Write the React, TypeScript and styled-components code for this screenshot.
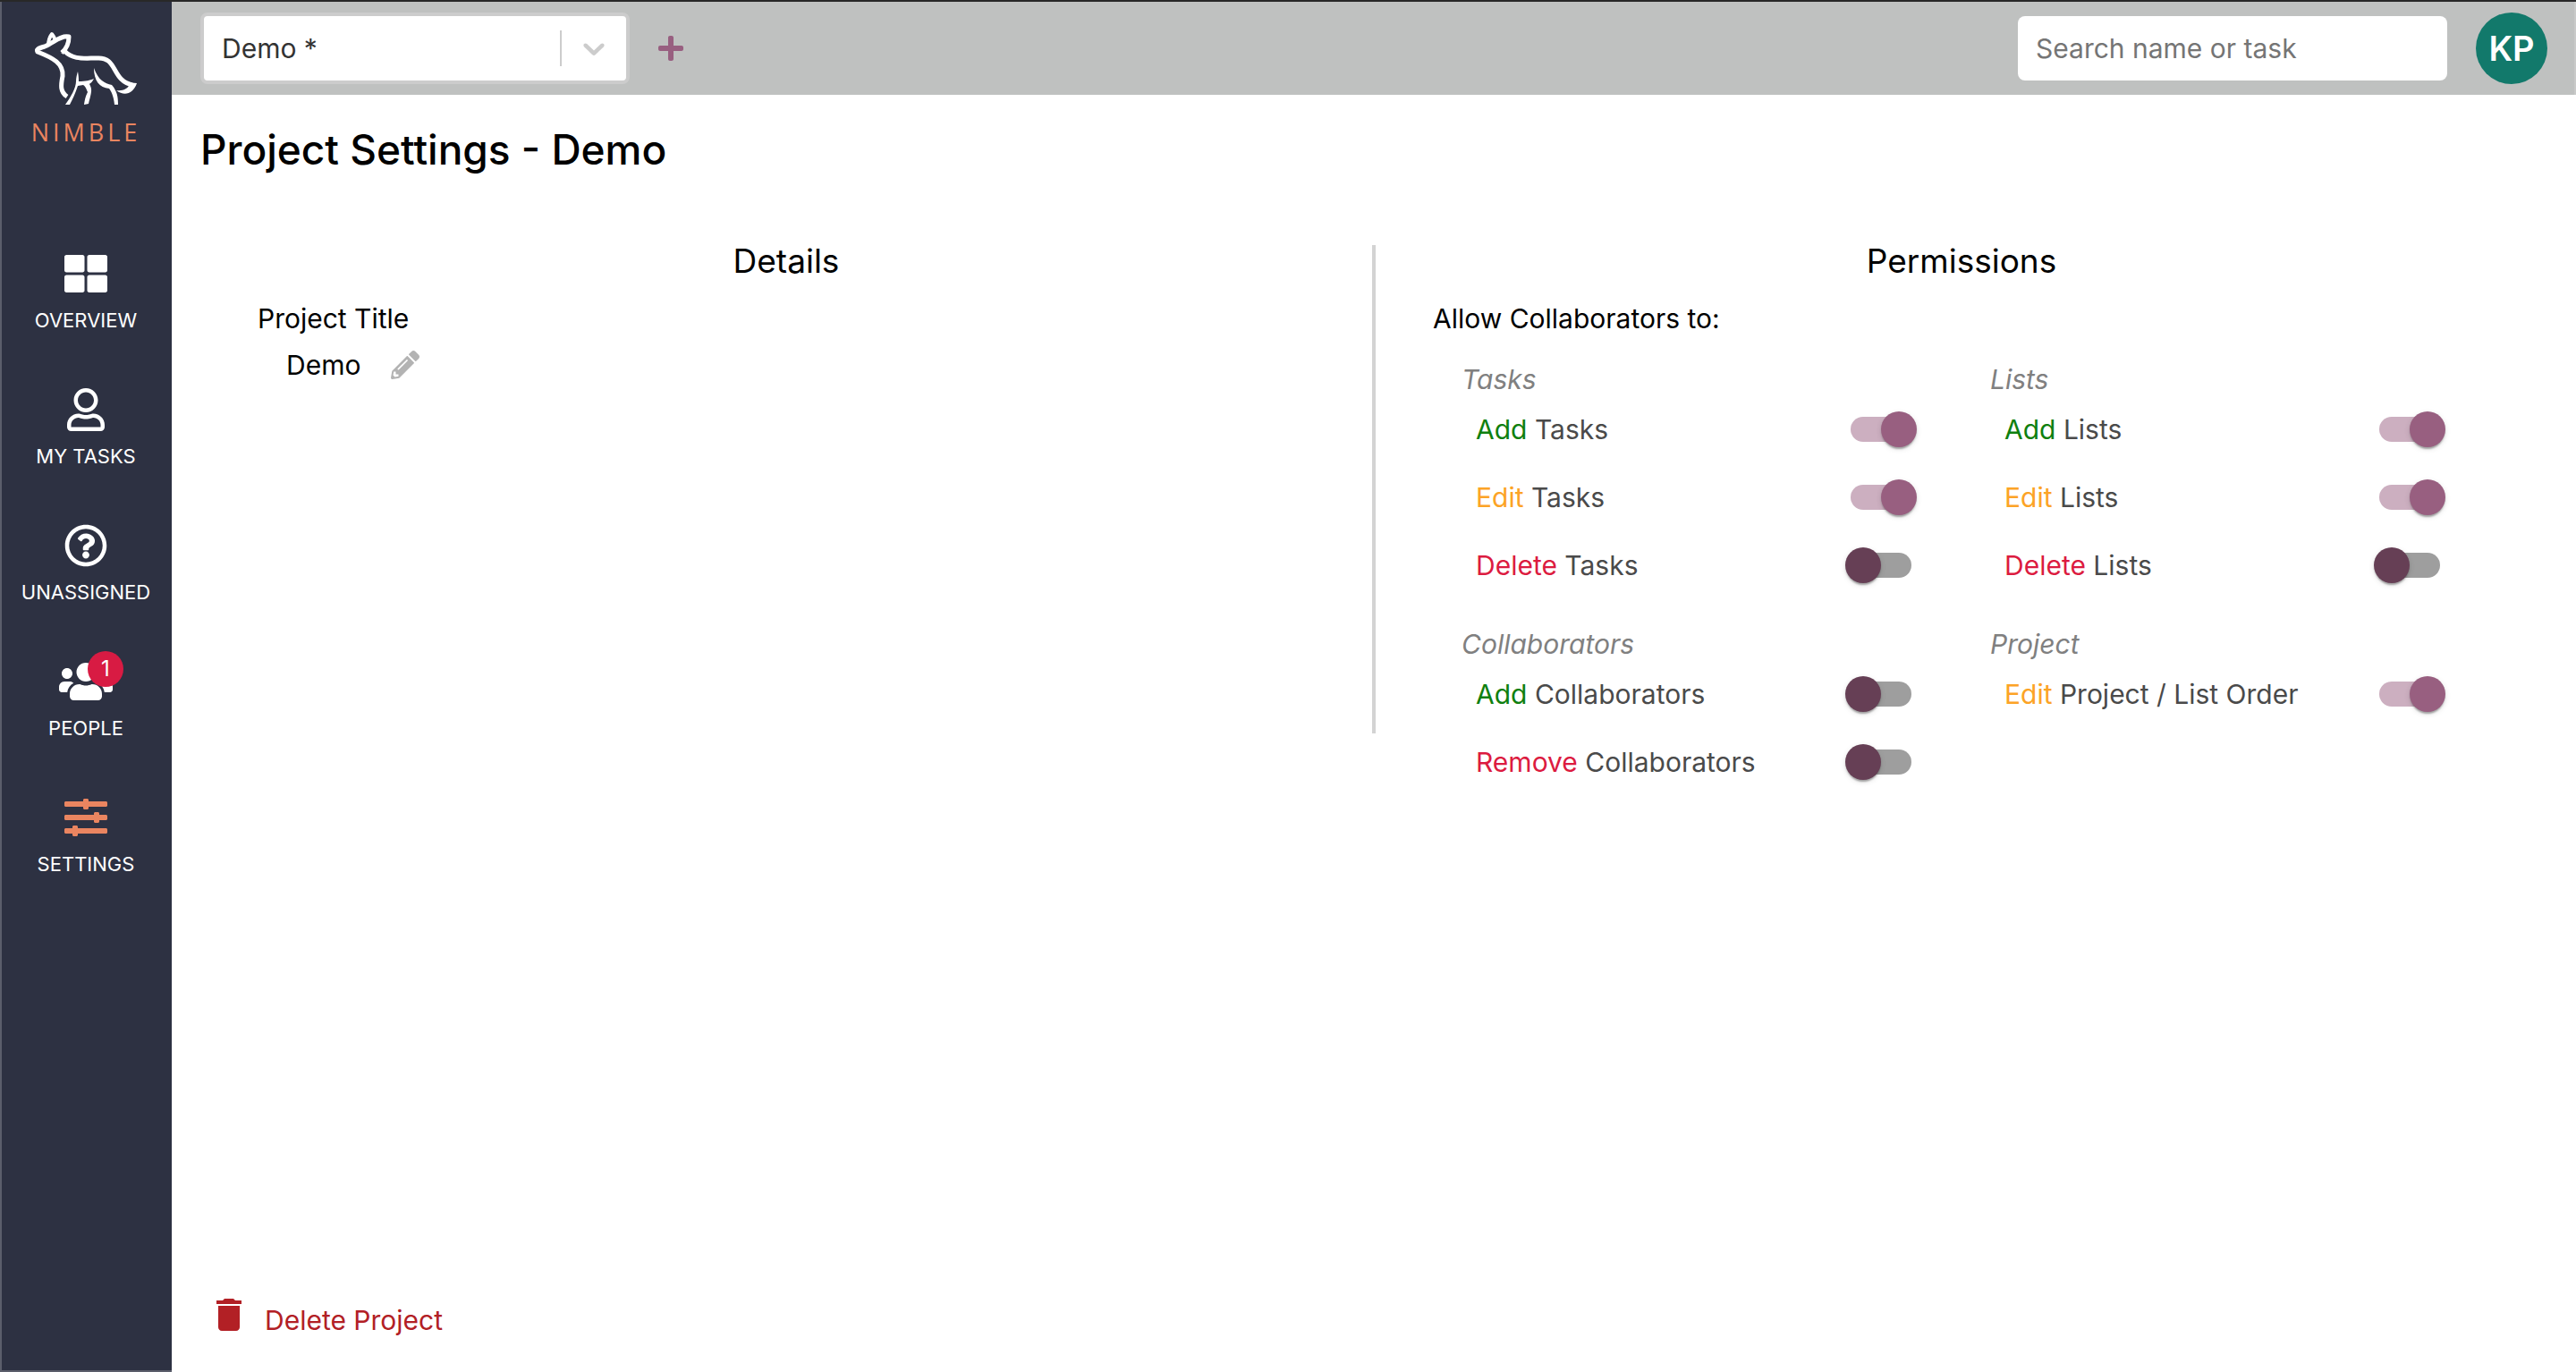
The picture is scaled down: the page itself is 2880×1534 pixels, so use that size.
import React, { useState } from "react";
import styled, { createGlobalStyle } from "styled-components";
import {
  FaThLarge,
  FaRegUser,
  FaRegQuestionCircle,
  FaUsers,
  FaSlidersH,
  FaPlus,
} from "react-icons/fa";
import { MdDelete } from "react-icons/md";

const GlobalStyle = createGlobalStyle`
  *, *::before, *::after { box-sizing: border-box; }
  body {
    margin: 0;
    background: #fff;
    color: #000;
    font-family: Inter, "Liberation Sans", sans-serif;
    font-size: 30px;
    line-height: 36px;
  }
  h1, h2, h3, p, ul { margin: 0; padding: 0; font-weight: 400; }
  ul { list-style: none; }
  button, input, select { font: inherit; color: inherit; }
  button { border: 0; padding: 0; background: none; cursor: pointer; }
`;

const Shell = styled.div`
  display: flex;
  min-height: 100vh;
  border-top: 2px solid #282828;
`;

const Sidebar = styled.nav`
  flex: none;
  width: 192px;
  padding: 32px 2px 0 0;
  display: flex;
  flex-direction: column;
  align-items: center;
  background: #2d3142;
  border-left: 2px solid #5b5e6b;
  border-bottom: 2px solid #5b5e6b;
`;

const Brand = styled.a`
  display: flex;
  flex-direction: column;
  align-items: center;
  color: #ea8560;
  text-decoration: none;
  font-family: "Open Sans", sans-serif;
  font-size: 27px;
  line-height: 32px;
  letter-spacing: 4px;
`;

const BrandName = styled.span`
  margin-top: 12px;
`;

const NavList = styled.ul`
  margin-top: 118px;
  display: flex;
  flex-direction: column;
  gap: 62px;
`;

const NavLink = styled.a`
  display: flex;
  flex-direction: column;
  align-items: center;
  gap: 14px;
  color: #fff;
  text-decoration: none;
  font-size: 22px;
  line-height: 28px;
`;

const IconHolder = styled.span<{ $active?: boolean; $wide?: boolean }>`
  position: relative;

  svg {
    display: block;
    width: ${(p) => (p.$wide ? "60px" : "48px")};
    height: 48px;
    color: ${(p) => (p.$active ? "#ea8560" : "#fff")};
  }
`;

const Badge = styled.span`
  position: absolute;
  top: -10px;
  right: -12px;
  width: 40px;
  height: 40px;
  border-radius: 50%;
  background: #d81b43;
  font-size: 24px;
  line-height: 40px;
  text-align: center;
`;

const Main = styled.div`
  flex: 1;
  min-width: 0;
  display: flex;
  flex-direction: column;
`;

const TopBar = styled.header`
  height: 104px;
  padding: 0 30px 0 32px;
  display: flex;
  align-items: center;
  gap: 32px;
  background: #bfc1c0;
  border-right: 2px solid #c9cac9;
`;

const Picker = styled.div`
  width: 480px;
  height: 80px;
  display: grid;
  align-items: center;
  border: 4px solid #ccc;
  border-radius: 8px;
  background: #fff;

  > * { grid-area: 1 / 1; }
`;

const PickerSelect = styled.select`
  width: 100%;
  height: 72px;
  padding: 0 80px 0 20px;
  appearance: none;
  border: 0;
  background: none;
  color: #333;
`;

const PickerArrow = styled.span`
  justify-self: end;
  display: flex;
  padding: 0 16px;
  border-left: 2px solid #ccc;
  color: #ccc;
  pointer-events: none;
`;

const AddButton = styled.button`
  display: flex;
  color: #985f80;

  svg {
    width: 28px;
    height: 32px;
  }
`;

const Search = styled.input`
  width: 480px;
  height: 72px;
  margin-left: auto;
  padding: 0 20px;
  border: 0;
  border-radius: 8px;
  background: #fff;

  &::placeholder { color: #757575; opacity: 1; }
`;

const Avatar = styled.button`
  width: 80px;
  height: 80px;
  border-radius: 50%;
  background: #12796b;
  color: #fff;
  font-size: 38px;
  font-weight: 600;
`;

const Page = styled.main`
  flex: 1;
  padding: 32px 32px 40px;
  display: flex;
  flex-direction: column;
`;

const PageTitle = styled.h1`
  font-size: 46px;
  line-height: 58px;
  font-weight: 500;
`;

const Panels = styled.div`
  margin-top: 78px;
  display: grid;
  grid-template-columns: 1fr 4px 1fr;
`;

const Divider = styled.div`
  height: 546px;
  background: #d3d3d3;
`;

const Panel = styled.section`
  padding: 0 64px;
`;

const PanelTitle = styled.h2`
  text-align: center;
  font-size: 37px;
  line-height: 36px;
`;

const PanelLead = styled.h3`
  margin-top: 28px;
  font-size: 30px;
`;

const ProjectName = styled.div`
  margin-top: 16px;
  padding-left: 32px;
  display: flex;
  align-items: center;
  gap: 34px;
`;

const EditButton = styled.button`
  display: flex;
  color: #b3b3b3;
`;

const GroupGrid = styled.div`
  margin-top: 32px;
  display: grid;
  grid-template-columns: 1fr 1fr;
  row-gap: 32px;
`;

const Group = styled.div`
  padding: 0 32px;
`;

const GroupTitle = styled.h3`
  font-size: 30px;
  font-style: italic;
  color: gray;
`;

const PermissionRow = styled.label`
  height: 76px;
  padding: 0 24px 0 16px;
  display: flex;
  align-items: center;
  justify-content: space-between;
  color: #4a4a4a;
`;

const actionColors = {
  Add: "#0f800f",
  Edit: "#fca326",
  Delete: "#dc1b40",
  Remove: "#dc1b40",
};

const Action = styled.span<{ $kind: keyof typeof actionColors }>`
  color: ${(p) => actionColors[p.$kind]};
`;

const Toggle = styled.input`
  appearance: none;
  width: 68px;
  height: 28px;
  margin: 0;
  display: flex;
  align-items: center;
  border-radius: 14px;
  background: #9e9e9e;
  cursor: pointer;

  &::before {
    content: "";
    flex: none;
    width: 40px;
    height: 40px;
    margin-left: -6px;
    border-radius: 50%;
    background: #663f55;
    box-shadow: 0 4px 2px -2px rgba(0, 0, 0, 0.2), 0 2px 2px rgba(0, 0, 0, 0.14),
      0 2px 6px rgba(0, 0, 0, 0.12);
  }

  &:checked { background: #ccafc0; }
  &:checked::before { margin-left: 34px; background: #985f80; }
`;

const DeleteButton = styled.button`
  margin-top: auto;
  padding-left: 8px;
  align-self: flex-start;
  display: flex;
  align-items: flex-end;
  gap: 16px;
  color: #b22025;
`;

const FoxLogo = () => (
  <svg width="116" height="86" viewBox="0 0 116 86" fill="none" aria-hidden="true">
    <g stroke="#fff" strokeWidth="5" strokeLinejoin="round">
      <path d="M37 74C29 69 30 61 32 51C33 37 22 31 4 24C2 21 5 20 12 18C22 14 30 5 39 7C39 14 37 20 31 25" />
      <path d="M16 17C16 12 17 8 20 4C23 8 24 11 24 13" strokeWidth="4" />
      <path d="M34 23C44 33 55 31 70 31C94 29 86 56 110 61" />
    </g>
    <g fill="#fff">
      <path d="M30 26L38 18L36 24Z" />
      <path d="M92 67C100 68 104 65 106 62L103 58L115 59C111 71 101 74 92 67Z" />
      <path d="M49 46C50 52 50 54 50 57C58 57 62 56 67 54C65 58 63 59 62 60C65 66 65 67 61 82L56 83C57 76 58 73 60 69C58 64 57 62 55 61L49 62C46 71 43 77 40 83H35C41 75 47 64 47 57C47 53 48 49 49 46Z" />
      <path d="M67 42C72 56 79 59 87 61C93 68 94 74 94 83H90C89 74 87 69 84 65C73 64 67 56 67 42Z" />
    </g>
  </svg>
);

const ChevronDown = () => (
  <svg width="40" height="40" viewBox="0 0 20 20" fill="currentColor" aria-hidden="true">
    <path d="M4.516 7.548c0.436-0.446 1.043-0.481 1.576 0l3.908 3.747 3.908-3.747c0.533-0.481 1.141-0.446 1.574 0 0.436 0.445 0.408 1.197 0 1.615-0.406 0.418-4.695 4.502-4.695 4.502-0.217 0.223-0.502 0.335-0.787 0.335s-0.57-0.112-0.789-0.335c0 0-4.287-4.084-4.695-4.502s-0.436-1.17 0-1.615z" />
  </svg>
);

const Pencil = () => (
  <svg width="32" height="32" viewBox="0 0 512 512" fill="currentColor" aria-hidden="true">
    <path d="M497.900 142.100l-46.100 46.100c-4.700 4.700-12.300 4.700-17 0l-111-111c-4.700-4.700-4.700-12.300 0-17l46.100-46.100c18.700-18.700 49.100-18.700 67.900 0l60.100 60.100c18.800 18.700 18.800 49.100 0 67.900zM284.200 99.800L21.600 362.400.400 483.900c-2.900 16.400 11.400 30.600 27.800 27.800l121.500-21.300 262.600-262.600c4.700-4.700 4.700-12.300 0-17l-111-111c-4.800-4.700-12.400-4.700-17.100 0zM124.100 339.900c-5.500-5.500-5.500-14.300 0-19.800l154-154c5.500-5.500 14.300-5.500 19.800 0s5.500 14.300 0 19.800l-154 154c-5.500 5.500-14.300 5.500-19.800 0zM88 424h48v36.300l-64.500 11.300-31.100-31.100L51.700 376H88v48z" />
  </svg>
);

const navItems = [
  { label: "OVERVIEW", icon: FaThLarge },
  { label: "MY TASKS", icon: FaRegUser },
  { label: "UNASSIGNED", icon: FaRegQuestionCircle },
  { label: "PEOPLE", icon: FaUsers, badge: 1, wide: true },
  { label: "SETTINGS", icon: FaSlidersH, active: true },
];

type Permission = { action: keyof typeof actionColors; subject: string; on: boolean };

const groups: { title: string; permissions: Permission[] }[] = [
  {
    title: "Tasks",
    permissions: [
      { action: "Add", subject: "Tasks", on: true },
      { action: "Edit", subject: "Tasks", on: true },
      { action: "Delete", subject: "Tasks", on: false },
    ],
  },
  {
    title: "Lists",
    permissions: [
      { action: "Add", subject: "Lists", on: true },
      { action: "Edit", subject: "Lists", on: true },
      { action: "Delete", subject: "Lists", on: false },
    ],
  },
  {
    title: "Collaborators",
    permissions: [
      { action: "Add", subject: "Collaborators", on: false },
      { action: "Remove", subject: "Collaborators", on: false },
    ],
  },
  {
    title: "Project",
    permissions: [{ action: "Edit", subject: "Project / List Order", on: true }],
  },
];

const PermissionToggle = ({ action, subject, on }: Permission) => {
  const [checked, setChecked] = useState(on);
  return (
    <PermissionRow>
      <span>
        <Action $kind={action}>{action}</Action> {subject}
      </span>
      <Toggle
        type="checkbox"
        role="switch"
        checked={checked}
        onChange={(e) => setChecked(e.target.checked)}
      />
    </PermissionRow>
  );
};

export default function App() {
  return (
    <>
      <GlobalStyle />
      <Shell>
        <Sidebar>
          <Brand href="#">
            <FoxLogo />
            <BrandName>NIMBLE</BrandName>
          </Brand>
          <NavList>
            {navItems.map(({ label, icon: Icon, badge, active, wide }) => (
              <li key={label}>
                <NavLink href="#">
                  <IconHolder $active={active} $wide={wide}>
                    <Icon />
                    {badge && <Badge>{badge}</Badge>}
                  </IconHolder>
                  {label}
                </NavLink>
              </li>
            ))}
          </NavList>
        </Sidebar>
        <Main>
          <TopBar>
            <Picker>
              <PickerSelect aria-label="Project" defaultValue="demo">
                <option value="demo">Demo *</option>
              </PickerSelect>
              <PickerArrow>
                <ChevronDown />
              </PickerArrow>
            </Picker>
            <AddButton aria-label="Add project">
              <FaPlus />
            </AddButton>
            <Search type="search" aria-label="Search" placeholder="Search name or task" />
            <Avatar>KP</Avatar>
          </TopBar>
          <Page>
            <PageTitle>Project Settings - Demo</PageTitle>
            <Panels>
              <Panel>
                <PanelTitle>Details</PanelTitle>
                <PanelLead>Project Title</PanelLead>
                <ProjectName>
                  Demo
                  <EditButton aria-label="Edit project title">
                    <Pencil />
                  </EditButton>
                </ProjectName>
              </Panel>
              <Divider />
              <Panel>
                <PanelTitle>Permissions</PanelTitle>
                <PanelLead>Allow Collaborators to:</PanelLead>
                <GroupGrid>
                  {groups.map((group) => (
                    <Group key={group.title}>
                      <GroupTitle>{group.title}</GroupTitle>
                      {group.permissions.map((permission) => (
                        <PermissionToggle key={permission.action} {...permission} />
                      ))}
                    </Group>
                  ))}
                </GroupGrid>
              </Panel>
            </Panels>
            <DeleteButton>
              <MdDelete size={48} />
              Delete Project
            </DeleteButton>
          </Page>
        </Main>
      </Shell>
    </>
  );
}
